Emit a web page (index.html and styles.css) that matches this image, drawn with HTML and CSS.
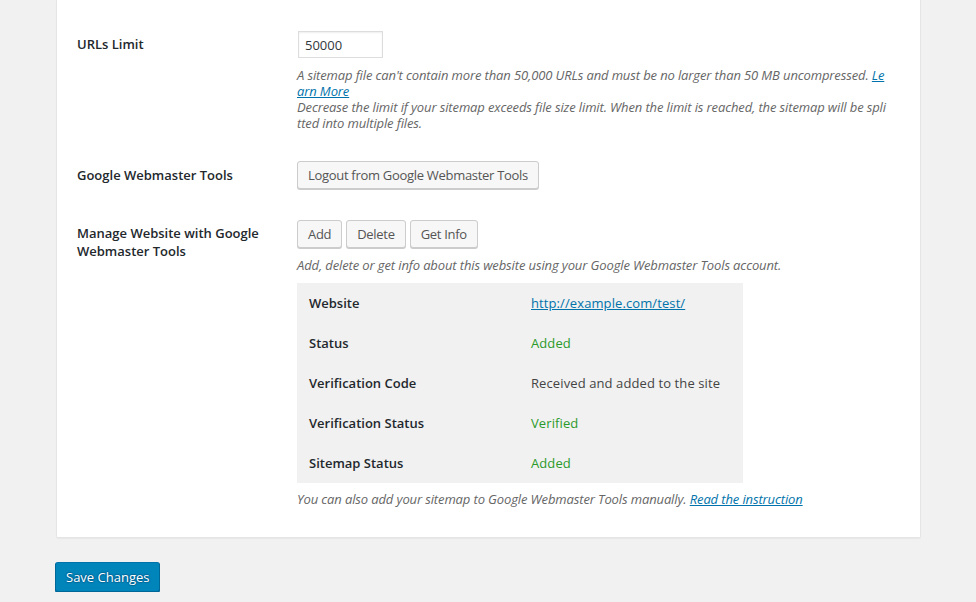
FILE: index.html
```html
<!DOCTYPE html>
<html>
  <head>
    <link rel="stylesheet" href="styles.css">
  </head>
  <body>
    <div class="wrap">
      <div class="settings-panel">
        <div class="form-row row-limit">
          <div class="form-label">URLs Limit</div>
          <div class="form-field">
            <input type="text" class="small-text" value="50000">
            <p class="description">A sitemap file can't contain more than 50,000 URLs and must be no larger than 50 MB uncompressed. <a href="#">Learn More</a><br>Decrease the limit if your sitemap exceeds file size limit. When the limit is reached, the sitemap will be splitted into multiple files.</p>
          </div>
        </div>
        <div class="form-row row-auth">
          <div class="form-label">Google Webmaster Tools</div>
          <div class="form-field">
            <button class="button">Logout from Google Webmaster Tools</button>
          </div>
        </div>
        <div class="form-row">
          <div class="form-label">Manage Website with Google Webmaster Tools</div>
          <div class="form-field">
            <div class="button-group">
              <button class="button">Add</button>
              <button class="button">Delete</button>
              <button class="button">Get Info</button>
            </div>
            <p class="description">Add, delete or get info about this website using your Google Webmaster Tools account.</p>
            <table class="gwt-info">
              <colgroup>
                <col class="col-label">
                <col>
              </colgroup>
              <tr>
                <th>Website</th>
                <td><a href="#">http://example.com/test/</a></td>
              </tr>
              <tr>
                <th>Status</th>
                <td class="ok">Added</td>
              </tr>
              <tr>
                <th>Verification Code</th>
                <td>Received and added to the site</td>
              </tr>
              <tr>
                <th>Verification Status</th>
                <td class="ok">Verified</td>
              </tr>
              <tr>
                <th>Sitemap Status</th>
                <td class="ok">Added</td>
              </tr>
            </table>
            <p class="description">You can also add your sitemap to Google Webmaster Tools manually. <a href="#">Read the instruction</a></p>
          </div>
        </div>
      </div>
      <p class="submit">
        <button class="button button-primary">Save Changes</button>
      </p>
    </div>
  </body>
</html>
```

FILE: styles.css
```css
body {
  margin: 0;
  background: #f1f1f1;
  color: #444;
  font-family: "Open Sans", "Noto Sans", sans-serif;
  font-size: 13px;
  line-height: 1.4;
}
a {
  color: #0073aa;
}
.wrap {
  padding: 0 55px 0 56px;
}
.settings-panel {
  background: #fff;
  border: 1px solid #e5e5e5;
  border-top: none;
  border-radius: 0 0 2px 2px;
  box-shadow: 0 1px 1px rgba(0,0,0,0.04);
  padding: 16px 20px 15px;
}
.form-row {
  display: grid;
  grid-template-columns: 220px 1fr;
  padding: 15px 0;
}
.row-limit {
  padding-bottom: 14px;
}
.row-auth {
  padding: 16px 0;
}
.form-label {
  color: #23282d;
  font-weight: 600;
  line-height: 18px;
  padding: 4px 20px 0 0;
}
.row-auth .form-label {
  padding-top: 5px;
}
.form-field {
  padding-right: 10px;
}
.small-text {
  display: block;
  width: 85px;
  height: 27px;
  margin: 0 0 0 1px;
  padding: 0 6px;
  box-sizing: border-box;
  border: 1px solid #ddd;
  box-shadow: inset 0 1px 2px rgba(0,0,0,0.07);
  color: #32373c;
  font: inherit;
}
.description {
  margin: 9px 0 0;
  color: #666;
  font-style: italic;
  line-height: 16px;
  letter-spacing: -0.12px;
  word-break: break-all;
}
.button-group {
  display: flex;
  gap: 4px;
}
.button {
  display: inline-block;
  height: 28px;
  padding: 0 10px 1px;
  border: 1px solid #ccc;
  border-radius: 3px;
  background: #f7f7f7;
  box-shadow: 0 1px 0 #ccc;
  color: #555;
  font: inherit;
  line-height: 26px;
  letter-spacing: -0.3px;
  white-space: nowrap;
}
.gwt-info {
  width: 446px;
  margin-top: 10px;
  background: #f1f1f1;
  border-collapse: collapse;
  table-layout: fixed;
  font-size: 13px;
}
.gwt-info .col-label {
  width: 222px;
}
.gwt-info th,
.gwt-info td {
  height: 40px;
  padding: 0 12px;
  text-align: left;
  white-space: nowrap;
}
.gwt-info th {
  color: #23282d;
  font-weight: 600;
}
.gwt-info td {
  letter-spacing: 0.1px;
}
.gwt-info td.ok {
  color: #2b9a2b;
}
.gwt-info + .description {
  margin-top: 8px;
}
.submit {
  margin: 24px 0 0 -1px;
}
.button-primary {
  height: 30px;
  padding: 0 10px;
  background: #0085ba;
  border-color: #0073aa #006799 #006799;
  box-shadow: 0 1px 0 #006799;
  color: #fff;
  line-height: 28px;
  letter-spacing: 0;
  text-shadow: 0 -1px 1px #006799, 1px 0 1px #006799, 0 1px 1px #006799, -1px 0 1px #006799;
}
```
